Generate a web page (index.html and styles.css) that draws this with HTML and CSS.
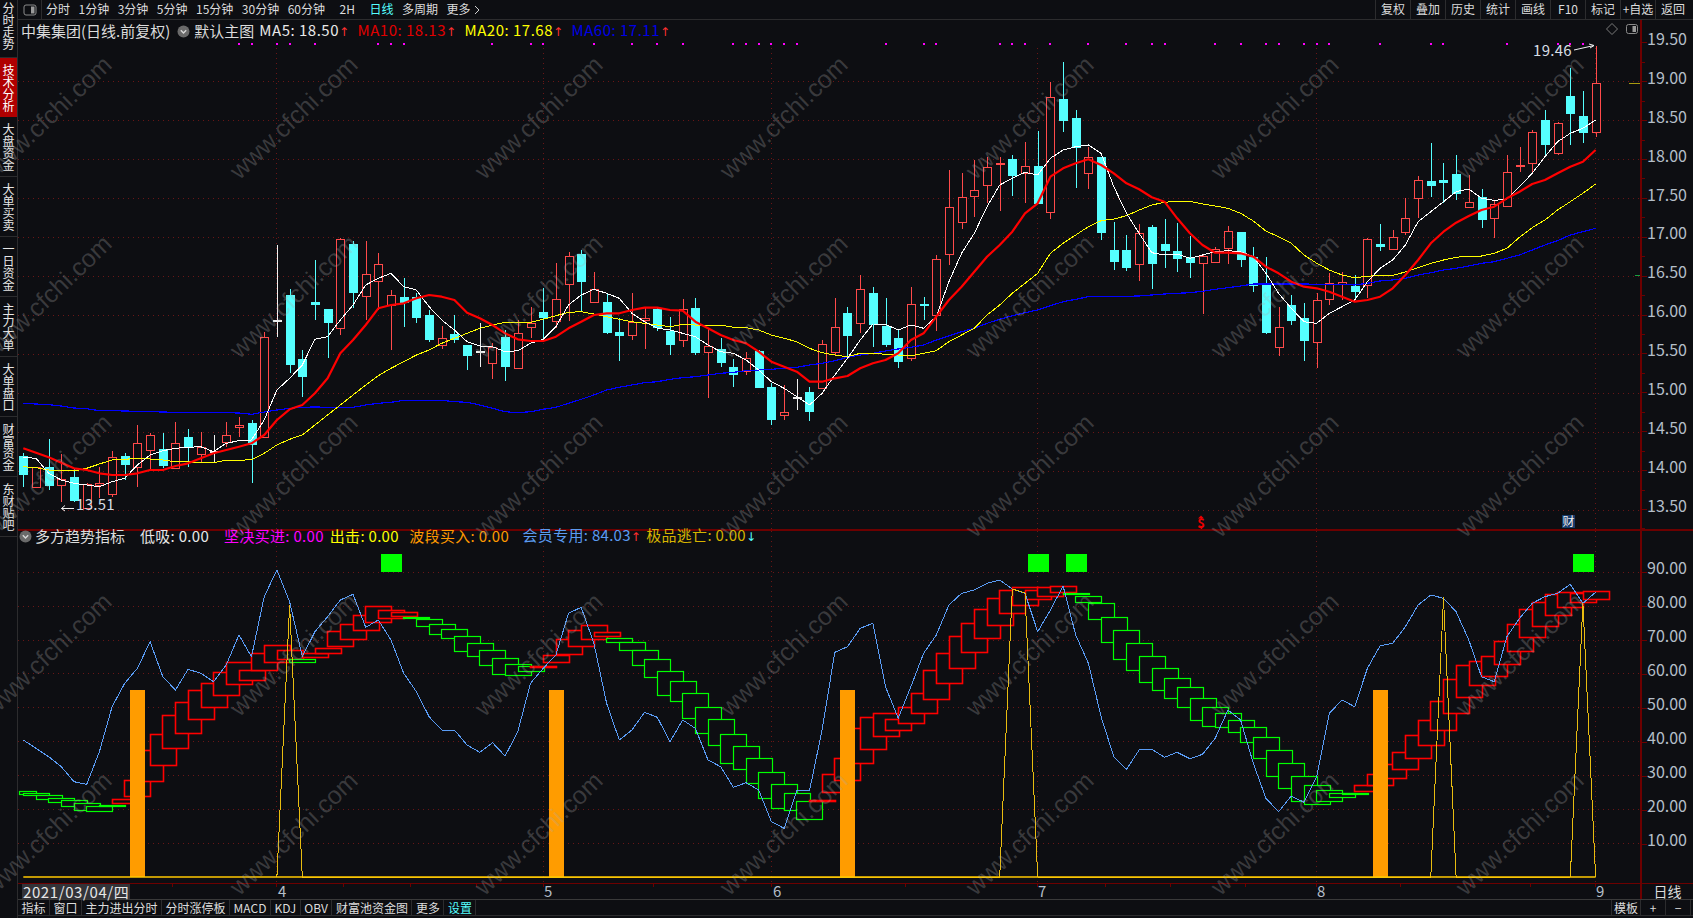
FILE: index.html
```html
<!DOCTYPE html>
<html lang="zh-CN">
<head>
<meta charset="utf-8">
<title>中集集团 日线</title>
<link rel="stylesheet" href="styles.css">
</head>
<body>
<div class="app">
  <nav class="rail">
    <a class="rail-item rail-first"><span>分时走势</span></a>
    <a class="rail-item rail-active"><span>技术分析</span></a>
    <a class="rail-item"><span>大盘资金</span></a>
    <a class="rail-item"><span>大单买卖</span></a>
    <a class="rail-item"><span>一日资金</span></a>
    <a class="rail-item"><span>主力大单</span></a>
    <a class="rail-item"><span>大单盘口</span></a>
    <a class="rail-item"><span>财富资金</span></a>
    <a class="rail-item"><span>东财贴吧</span></a>
  </nav>

  <div class="content">
    <header class="topbar">
      <div class="panel-toggle">
        <svg class="panel-icon" width="14" height="12" viewBox="0 0 14 12"><rect class="icon-frame" x="1" y="1" width="12" height="10" rx="2"/><rect class="icon-fill" x="8" y="2.5" width="3.5" height="7"/></svg>
      </div>
      <div class="periods">
        <span>分时</span><span>1分钟</span><span>3分钟</span><span>5分钟</span><span>15分钟</span><span>30分钟</span><span>60分钟</span><span class="period-2h">2H</span><span class="is-active">日线</span><span>多周期</span><span>更多 <svg class="more-caret" width="6" height="10" viewBox="0 0 6 10"><path d="M1 1l4 4-4 4"/></svg></span>
      </div>
      <div class="tools">
        <span>复权</span><span>叠加</span><span>历史</span><span>统计</span><span>画线</span><span>F10</span><span>标记</span><span>+自选</span><span>返回</span>
      </div>
    </header>

    <section class="pane pane-main">
      <div class="plot">
        <svg id="mainChart" class="chart" width="1622" height="509" viewBox="18 20 1622 509"></svg>
        <div class="legend legend-main">
          <span class="lg-title">中集集团(日线.前复权)</span>
          <svg class="lg-dot" width="13" height="13" viewBox="0 0 13 13"><circle class="dot-bg" cx="6.5" cy="6.5" r="6"/><path class="dot-chev" d="M3.8 5.2l2.7 2.7 2.7-2.7"/></svg>
          <span class="lg-title">默认主图</span>
          <span class="lg-white lg-ma">MA5: 18.50<i class="up">↑</i></span>
          <span class="lg-red lg-ma">MA10: 18.13<i class="up">↑</i></span>
          <span class="lg-yellow lg-ma">MA20: 17.68<i class="up">↑</i></span>
          <span class="lg-blue lg-ma">MA60: 17.11<i class="up">↑</i></span>
        </div>
      </div>
      <div class="axis axis-main">
        <span>19.50</span><span>19.00</span><span>18.50</span><span>18.00</span><span>17.50</span><span>17.00</span><span>16.50</span><span>16.00</span><span>15.50</span><span>15.00</span><span>14.50</span><span>14.00</span><span>13.50</span>
      </div>
    </section>

    <section class="pane pane-ind">
      <div class="plot">
        <svg id="indChart" class="chart" width="1622" height="352" viewBox="18 531 1622 352"></svg>
        <div class="legend legend-ind">
          <svg class="lg-dot" width="13" height="13" viewBox="0 0 13 13"><circle class="dot-bg" cx="6.5" cy="6.5" r="6"/><path class="dot-chev" d="M3.8 5.2l2.7 2.7 2.7-2.7"/></svg>
          <span class="lg-title lg-name">多方趋势指标</span>
          <span class="lg-white">低吸: 0.00</span>
          <span class="lg-magenta">坚决买进: 0.00</span>
          <span class="lg-yellow lg-close">出击: 0.00</span>
          <span class="lg-orange">波段买入: 0.00</span>
          <span class="lg-sky">会员专用: 84.03<i class="up">↑</i></span>
          <span class="lg-gold">极品逃亡: 0.00<i class="down">↓</i></span>
        </div>
      </div>
      <div class="axis axis-ind">
        <span>90.00</span><span>80.00</span><span>70.00</span><span>60.00</span><span>50.00</span><span>40.00</span><span>30.00</span><span>20.00</span><span>10.00</span>
      </div>
    </section>

    <div class="date-row">
      <div id="dateAxis" class="date-axis">
        <span class="date-current">2021/03/04/四</span>
      </div>
      <div class="date-side">日线</div>
    </div>

    <footer class="tabbar">
      <div class="tabs">
        <span>指标</span><span>窗口</span><span>主力进出分时</span><span>分时涨停板</span><span>MACD</span><span>KDJ</span><span>OBV</span><span>财富池资金图</span><span>更多</span><span class="is-active">设置</span>
      </div>
      <div class="tab-tools">
        <span class="tab-tpl">模板</span><span class="tab-btn">+</span><span class="tab-btn">−</span>
      </div>
    </footer>
  </div>

  <div id="watermarks" class="watermarks"></div>
</div>
<script src="chart.js"></script>
</body>
</html>
```
FILE: styles.css
```css
* { box-sizing: border-box; }
html, body { margin: 0; height: 100%; background: #0d0e12; overflow: hidden; }
body { font-family: "Noto Sans CJK SC", "Noto Sans", sans-serif; color: #dcdcdc; }

.app { position: relative; display: flex; width: 1693px; height: 918px; overflow: hidden; background: #0d0e12; }

/* left rail */
.rail { width: 18px; flex: none; border-right: 1px solid #2c2c2e; display: flex; flex-direction: column; }
.rail-item { height: 60px; display: flex; align-items: center; justify-content: center; border-bottom: 1px solid #2c2c2e; color: #e6e6e6; font-size: 12px; line-height: 15px; }
.rail-item span { writing-mode: vertical-rl; text-orientation: upright; letter-spacing: 0; }
.rail-first { height: 58px; padding-bottom: 5px; }
.rail-active { background: #b00000; color: #fff; border-bottom: 0; margin-right: 0; height: 59px; }

.content { flex: 1; min-width: 0; display: flex; flex-direction: column; }

/* top bar */
.topbar { height: 20px; flex: none; display: flex; align-items: stretch; border-bottom: 1px solid #2c2c2e; font-size: 12px; line-height: 18px; }
.panel-toggle { width: 24px; display: flex; align-items: center; justify-content: center; border-right: 1px solid #2c2c2e; }
.icon-frame { fill: none; stroke: #8a8a8a; }
.icon-fill { fill: #9a9a9a; }
.periods { display: flex; gap: 8.5px; padding-left: 4px; flex: 1; }
.period-2h { margin: 0 6px; }
.more-caret { margin-left: 1px; vertical-align: -1px; }
.more-caret path { fill: none; stroke: #d0d0d0; }
.is-active { color: #55ffff; }
.tools { display: flex; margin-right: 3px; }
.tools span { width: 35px; text-align: center; border-left: 1px solid #2c2c2e; white-space: nowrap; }

/* panes */
.pane { display: flex; flex: none; }
.pane-main { height: 511px; border-bottom: 2px solid #6d0000; }
.pane-ind { height: 353px; border-bottom: 1px solid #6d0000; }
.plot { position: relative; width: 1622px; flex: none; }
.chart { display: block; }
.axis { width: 53px; flex: none; border-left: 2px solid #6d0000; display: flex; flex-direction: column; color: #b4bec8; font-size: 16px; padding-left: 5px; }
.axis span { position: relative; top: -1px; display: block; flex: none; }
.axis span::before { content: ""; position: absolute; left: -5px; top: 60%; width: 5px; height: 1px; background: #6d0000; }
.axis-main span { height: 38.9px; line-height: 38.9px; }
.axis-main span::after { content: ""; position: absolute; left: -5px; top: 110%; width: 3px; height: 1px; background: #6d0000; }
.axis-ind { padding-top: 20px; }
.axis-ind span { height: 34.03px; line-height: 34.03px; }
.axis-ind span::before { top: 64%; }

/* legends */
.legend { position: absolute; left: 0; top: 0; display: flex; align-items: center; font-size: 15px; line-height: 18px; white-space: nowrap; }
.legend i { font-style: normal; font-family: "DejaVu Sans", sans-serif; font-size: 12px; margin-left: 0; }
.legend-main { left: 3px; top: 1px; gap: 6px; }
.legend-main .lg-dot { margin: 0 -2px 0 1px; }
.legend-ind { left: 1px; top: 0; gap: 15px; height: 14px; margin-top: -2px; padding-top: 0; letter-spacing: .3px; }
.legend .lg-dot { flex: none; }
.dot-bg { fill: #6a6a6a; }
.dot-chev { fill: none; stroke: #d8d8d8; stroke-width: 1.4; }
.lg-title { color: #dcdcdc; }
.lg-name { margin-left: -12px; letter-spacing: 0; }
.lg-close { margin-left: -9px; }
.lg-ma { letter-spacing: .5px; margin-left: -1px; }
.lg-ma + .lg-ma { margin-left: 2px; }
.lg-white { color: #e8e8e8; }
.lg-red { color: #e00000; }
.lg-yellow { color: #ffff00; }
.lg-blue { color: #0000e6; }
.lg-magenta { color: #ff00ff; }
.lg-orange { color: #ff9900; margin-left: -4.5px; }
.lg-sky { color: #5b9bf0; margin-left: -1.5px; }
.lg-gold { color: #d6b400; margin-left: -10px; }
.up { color: #ff3030; }
.down { color: #55ffff; }

/* date row */
.date-row { height: 16px; flex: none; display: flex; border-bottom: 1px solid #3a3a3a; }
.date-axis { position: relative; width: 1622px; flex: none; font-size: 15px; line-height: 15px; color: #b4bec8; }
.date-current { position: absolute; left: 4px; top: 0; height: 15px; padding: 0 1px; background: #333338; color: #e6e6e6; letter-spacing: .6px; }
.date-tick { position: absolute; top: -1px; }
.date-mark { position: absolute; top: 0; width: 1px; height: 3px; background: #6d0000; }
.date-side { width: 53px; flex: none; border-left: 2px solid #6d0000; text-align: center; font-size: 14px; line-height: 15px; color: #dcdcdc; }

/* bottom tabs */
.tabbar { height: 16px; flex: none; display: flex; justify-content: space-between; border-bottom: 1px solid #2c2c2e; font-size: 12px; line-height: 15px; }
.tabs { display: flex; }
.tabs span { padding: 0 3.5px; border-right: 1px solid #2c2c2e; white-space: nowrap; }
.tab-tools { display: flex; margin-right: 2px; }
.tab-tpl { width: 30px; text-align: center; border-left: 1px solid #2c2c2e; border-right: 1px solid #2c2c2e; }
.tab-btn { width: 25px; text-align: center; border-right: 1px solid #2c2c2e; }

/* watermark overlay */
.watermarks { position: absolute; left: -74.5px; top: 28px; display: grid; grid-template-columns: repeat(7, 245.3px); grid-auto-rows: 179px; pointer-events: none; }
.wm { display: flex; align-items: center; justify-content: center; white-space: nowrap; font-family: "Liberation Sans", sans-serif; font-size: 25px; color: rgba(170, 170, 170, .28); }
.wm span { display: block; transform: rotate(-43.5deg); }

/* chart marks */
.grid { stroke: #6a1616; stroke-width: 1; stroke-dasharray: 1 4; fill: none; }
.wick-u { stroke: #ff4a4a; }
.wick-d { stroke: #55ffff; }
.wick-w { stroke: #f0f0f0; }
.body-u { fill: #0d0e12; stroke: #ff4a4a; }
.body-d { fill: #55ffff; stroke: #55ffff; }
.body-w { fill: #f0f0f0; stroke: #f0f0f0; }
.crisp { shape-rendering: crispEdges; }
.line { fill: none; stroke-linejoin: round; }
.ma5 { stroke: #ffffff; stroke-width: 1; shape-rendering: crispEdges; }
.ma10 { stroke: #ff0000; stroke-width: 2.2; }
.ma20 { stroke: #ffff00; stroke-width: 1; shape-rendering: crispEdges; }
.ma60 { stroke: #0000ff; stroke-width: 1.2; shape-rendering: crispEdges; }
.signal { fill: #ff00ff; }
.note { fill: #d6dde4; font-size: 15px; letter-spacing: .3px; }
.note-arrow { fill: none; stroke: #f0f0f0; stroke-width: 1; }
.dollar { fill: #f00000; font-size: 13px; font-weight: 700; text-anchor: middle; }
.dollar-cap { fill: #f00000; }
.tag-bg { fill: #163a6a; }
.tag-text { fill: #f0f0f0; font-size: 12px; text-anchor: middle; }
.side-yellow { stroke: #a89a10; }
.side-green { stroke: #18a040; }
.icon-diamond { fill: none; stroke: #7a7a7a; }
.box-r { fill: #0d0e12; stroke: #ff0000; stroke-width: 1.6; }
.box-g { fill: #0d0e12; stroke: #00ff00; stroke-width: 1.2; }
.bar-orange { fill: #ff9c00; }
.bar-green { fill: #00ff00; }
.sky { stroke: #5a9cf5; stroke-width: 1; shape-rendering: crispEdges; }
.spike { stroke: #e8bc10; stroke-width: 1; shape-rendering: crispEdges; }
.baseline { stroke: #ffc800; stroke-width: 1.6; }
```
FILE: chart.js
```js
var NS = "http://www.w3.org/2000/svg";
function el(parent, tag, attrs, text) {
  var n = document.createElementNS(NS, tag);
  for (var k in attrs) n.setAttribute(k, attrs[k]);
  if (text) n.textContent = text;
  parent.appendChild(n);
  return n;
}
function X(i) { return 23.3 + 12.68 * i; }
function S(x) { return Math.round(x) + 0.5; }

/* [type, bodyTop, bodyBottom, wickTop, wickBottom], values are y*3 */
var candles = [
["d",1368,1422,1360,1462],["u",1402,1463,1400,1463],["d",1400,1455,1318,1470],["u",1438,1457,1362,1505],["d",1432,1502,1408,1505],
["u",1453,1525,1450,1525],["u",1450,1456,1400,1495],["u",1370,1480,1352,1492],["d",1368,1392,1360,1440],["u",1330,1403,1275,1460],
["u",1306,1350,1300,1408],["d",1348,1395,1300,1405],["u",1328,1403,1267,1405],["d",1312,1343,1288,1400],["u",1340,1360,1297,1385],
["w",1354,1356,1305,1385],["u",1305,1325,1267,1340],["u",1276,1282,1250,1310],["d",1268,1330,1260,1448],["u",1012,1312,995,1312],
["w",959,961,735,1012],["d",885,1092,868,1120],["d",1078,1128,1050,1190],["d",906,912,780,960],["d",927,965,927,1075],
["u",718,985,715,1005],["d",732,875,722,925],["u",823,890,722,960],["u",793,845,760,930],["u",886,915,870,1050],
["d",892,908,835,980],["d",892,953,880,970],["d",946,1017,930,1025],["u",1013,1035,978,1047],["d",1002,1017,945,1030],
["d",1035,1065,1035,1110],["w",1054,1056,970,1100],["u",1042,1090,1030,1137],["d",1010,1097,990,1142],["u",998,1102,960,1102],
["u",970,983,920,1015],["d",937,953,865,1020],["u",898,963,790,985],["u",768,853,755,963],["d",762,843,750,935],
["u",866,905,816,905],["d",907,998,880,1002],["d",997,1007,955,1082],["u",965,1003,880,1020],["u",955,960,925,1047],
["d",928,982,925,992],["d",993,1032,950,1065],["u",928,1022,897,1040],["d",924,1055,895,1065],["u",1037,1055,985,1193],
["d",1047,1085,1015,1100],["d",1102,1124,1077,1160],["u",1075,1115,1055,1125],["d",1053,1160,1050,1165],["d",1160,1257,1150,1275],
["u",1235,1243,1155,1260],["w",1191,1193,1137,1230],["d",1176,1233,1160,1262],["u",1033,1165,1020,1165],["u",982,1058,895,1068],
["d",940,1005,920,1075],["u",868,970,825,998],["d",880,973,860,1040],["d",978,1033,895,1042],["d",1015,1085,990,1105],
["u",913,1075,862,1082],["d",913,917,892,960],["u",778,945,765,992],["u",620,760,510,795],["u",592,667,520,687],
["u",571,590,480,650],["u",502,556,470,610],["u",490,494,470,632],["d",477,525,465,587],["u",499,520,425,610],
["d",498,610,392,612],["u",290,636,245,656],["d",297,360,185,395],["d",354,442,330,565],["u",472,520,440,568],
["d",472,698,470,720],["d",750,782,665,810],["d",750,800,705,812],["u",700,793,672,843],["d",682,791,675,866],
["d",733,752,657,805],["d",754,776,670,815],["d",771,785,708,833],["u",768,790,765,942],["u",746,784,740,787],
["u",692,742,678,792],["d",697,779,697,802],["d",770,853,740,875],["d",855,995,770,1002],["u",980,1039,920,1067],
["d",915,960,885,975],["d",955,1022,908,1082],["u",899,1024,880,1103],["u",850,898,820,915],["u",845,852,815,900],
["d",858,872,825,895],["u",718,855,715,893],["d",733,740,672,753],["u",710,745,690,748],["u",655,697,595,705],
["u",541,595,527,653],["d",544,557,430,590],["d",541,548,488,610],["d",523,580,465,600],["u",605,620,525,625],
["d",592,659,568,683],["u",612,655,602,715],["u",515,617,465,618],["u",496,499,440,515],["u",395,487,390,520],
["d",361,434,330,472],["u",368,457,365,465],["d",289,341,205,435],["d",349,398,272,430],["u",250,397,137,412]
];

var ma5 = [1372,1375,1420,1440,1450,1455,1460,1445,1435,1395,1365,1352,1345,1342,1340,1355,1330,1322,1320,1260,1170,1135,1095,1018,1010,960,915,855,835,820,860,870,920,960,990,1025,1038,1040,1055,1052,1030,1018,980,915,885,868,880,895,940,965,985,990,1000,1010,1035,1055,1060,1080,1110,1145,1165,1190,1215,1180,1125,1075,
1020,972,973,990,975,985,950,845,760,700,620,555,535,517,525,475,450,440,435,460,560,640,700,758,765,762,775,765,755,752,755,770,820,880,925,965,970,940,920,900,845,805,780,735,665,635,605,575,567,595,601,598,560,520,470,425,400,385,360];
var ma10 = [1345,1358,1372,1388,1405,1410,1420,1425,1425,1420,1410,1410,1398,1390,1375,1360,1350,1340,1330,1305,1260,1228,1215,1180,1135,1060,1020,975,925,915,910,895,885,890,900,938,955,975,1000,1018,1023,1023,1010,985,965,945,940,940,930,923,923,930,932,965,985,1005,1020,1030,1055,1085,1100,1115,1145,1145,1135,1128,
1105,1090,1080,1060,1020,1000,950,900,860,815,770,735,695,640,610,530,505,490,478,495,520,550,568,592,605,655,700,735,758,758,760,770,800,820,845,860,865,875,890,905,900,890,865,825,780,730,695,668,648,630,620,595,575,552,540,520,500,485,450];
var ma20 = [1400,1403,1410,1412,1413,1405,1392,1380,1378,1375,1377,1380,1385,1385,1388,1388,1381,1381,1379,1360,1335,1318,1305,1275,1245,1215,1185,1155,1127,1105,1085,1065,1050,1030,1015,1000,985,975,967,967,967,958,947,937,935,942,950,958,965,970,975,980,973,975,975,975,982,983,990,1005,1015,1025,1045,1058,1065,1070,
1060,1060,1063,1065,1067,1060,1052,1025,1005,985,945,915,880,850,820,760,730,705,680,662,657,647,630,615,607,604,604,612,618,625,640,663,693,710,730,765,790,810,825,833,829,826,826,816,803,790,780,772,768,768,760,745,712,683,660,630,605,580,552];
var ma60 = [1210,1212,1214,1218,1224,1226,1232,1232,1233,1234,1235,1236,1237,1238,1238,1238,1238,1239,1243,1236,1230,1225,1222,1221,1222,1222,1222,1215,1210,1207,1201,1201,1201,1201,1205,1207,1215,1225,1235,1238,1235,1228,1222,1210,1198,1185,1170,1162,1155,1148,1145,1138,1133,1130,1125,1120,1117,1112,1110,1108,1105,1102,1095,1090,1082,1072,
1065,1060,1053,1047,1042,1035,1020,1008,995,985,970,958,947,938,930,917,905,898,890,890,889,889,888,885,882,880,878,874,868,863,858,852,852,852,852,852,853,853,853,855,850,843,840,835,825,818,810,805,798,790,785,775,765,750,735,722,705,695,685];

var sky = [720,745,770,800,845,853,755,620,550,505,425,530,570,508,520,545,495,405,470,290,210,305,470,395,350,300,283,382,360,420,520,575,650,690,690,735,757,728,768,695,550,505,465,340,322,430,610,720,690,637,652,725,660,685,780,800,862,848,870,965,985,872,872,690,457,440,
385,370,560,655,560,460,405,315,280,270,250,240,267,280,395,330,258,405,490,650,770,808,750,748,772,757,776,763,715,630,660,790,895,935,888,907,830,640,600,620,505,437,430,380,315,285,295,335,420,530,545,410,355,310,290,280,253,310,277];

var boxes = [[874,882],[880,887],[886,899],[893,905],[901,918],[910,930],[917,932],[916,920],
[898,910],[841,890],[750,842],[703,797],[646,745],[607,700],[571,658],[550,622],[517,586],[487,553],[509,538],[460,512],[436,487],[451,477],[478,488],[459,470],[444,460],[394,440],[371,416],[346,391],[319,367],[331,355],[337,350],[350,353],[358,380],[373,404],[388,415],[409,453],[430,470],[451,497],[475,523],[493,526],[498,512],[497,498],[466,488],[418,463],[391,440],[376,418],[397,410],[415,428],[427,450],[451,496],[478,532],[514,586],[544,604],[580,655],[622,700],[658,736],[703,790],[739,808],[775,850],[817,895],[853,925],[880,932],[903,956],[900,903],[823,878],[775,842],[685,790],[650,746],[640,710],[658,692],[620,668],[580,641],[510,596],[460,551],[408,503],[370,458],[328,416],[295,377],[271,341],[260,315],[271,298],[262,288],[259,277],[278,280],[287,305],[310,358],[350,425],[391,479],[430,512],[469,548],[503,569],[533,592],[560,620],[593,659],[622,678],[640,682],[661,698],[682,728],[712,776],[751,830],[790,866],[829,905],[856,914],[871,905],[878,890],[880,883],[854,872],[823,857],[793,836],[757,808],[706,776],[661,737],[604,692],[538,641],[496,593],[484,556],[469,529],[424,494],[373,455],[328,413],[305,377],[281,343],[275,319],[280,308],[272,295]];
function isGreen(i) {
  return i <= 7 || i === 22 || (i >= 31 && i <= 40) || (i >= 47 && i <= 62) || (i >= 83 && i <= 105);
}

var signals = [17,18,20,21,23,28,29,30,37,40,41,45,48,50,52,56,57,58,59,60,61,68,71,72,77,78,79,81,84,87,89,90,94,96,98,99,101,102,103,107,111,112,117,121,122,123];
var monthLines = [276.5, 543.5, 771.5, 1037.5, 1316.5, 1595.5];

function drawMain(svg) {
  for (var k = 0; k < 11; k++) {
    var gy = Math.round(81 + 38.95 * k) + 0.5;
    el(svg, "line", {x1: 18, x2: 1640, y1: gy, y2: gy, "class": "grid"});
  }
  el(svg, "line", {x1: 18, x2: 1640, y1: 510.5, y2: 510.5, "class": "grid"});
  monthLines.forEach(function (mx) {
    el(svg, "line", {x1: mx, x2: mx, y1: 48, y2: 529, "class": "grid"});
  });
  signals.forEach(function (i) {
    el(svg, "rect", {x: Math.round(X(i)) - 1, y: 43, width: 2, height: 2, "class": "signal crisp"});
  });
  candles.forEach(function (c, i) {
    var cx = S(X(i));
    var t = c[0];
    el(svg, "line", {x1: cx, x2: cx, y1: c[3] / 3, y2: c[4] / 3, "class": "wick-" + t + " crisp"});
    var top = Math.round(c[1] / 3) + 0.5;
    var h = Math.max(1, Math.round((c[2] - c[1]) / 3));
    el(svg, "rect", {x: cx - 4, y: top, width: 8, height: h, "class": "body-" + t + " crisp"});
  });
  [[ma60, "ma60"], [ma20, "ma20"], [ma5, "ma5"], [ma10, "ma10"]].forEach(function (pair) {
    var pts = pair[0].map(function (v, i) { return X(i).toFixed(1) + "," + (v / 3).toFixed(1); }).join(" ");
    el(svg, "polyline", {points: pts, "class": "line " + pair[1]});
  });
  el(svg, "text", {x: 1533, y: 56, "class": "note"}, "19.46");
  el(svg, "path", {d: "M1574 50L1594 45.5M1589 44L1594 45.5L1590 48", "class": "note-arrow"});
  el(svg, "text", {x: 76, y: 510, "class": "note"}, "13.51");
  el(svg, "path", {d: "M74 508.5H61.5M65 505.5L61.5 508.5L65 511", "class": "note-arrow"});
  el(svg, "text", {x: 1201, y: 528, "class": "dollar"}, "$");
  el(svg, "polygon", {points: "1198,518.5 1204,518.5 1201,515.5", "class": "dollar-cap"});
  el(svg, "rect", {x: 1562, y: 515, width: 13, height: 13, "class": "tag-bg"});
  el(svg, "text", {x: 1568.5, y: 526, "class": "tag-text"}, "财");
  el(svg, "line", {x1: 1629, x2: 1640, y1: 83.5, y2: 83.5, "class": "side-yellow crisp"});
  el(svg, "line", {x1: 1635, x2: 1640, y1: 275.5, y2: 275.5, "class": "side-green crisp"});
  el(svg, "polygon", {points: "1612,23.5 1617.5,29 1612,34.5 1606.5,29", "class": "icon-diamond"});
  el(svg, "rect", {x: 1626.5, y: 24.5, width: 11, height: 9, rx: 2, "class": "icon-frame"});
  el(svg, "rect", {x: 1632.5, y: 26, width: 3.5, height: 6, "class": "icon-fill"});
}

function drawIndicator(svg) {
  [572, 606, 640, 673, 707, 741, 775, 809, 843].forEach(function (gy) {
    el(svg, "line", {x1: 18, x2: 1640, y1: gy + 0.5, y2: gy + 0.5, "class": "grid"});
  });
  monthLines.forEach(function (mx) {
    el(svg, "line", {x1: mx, x2: mx, y1: 531, y2: 883, "class": "grid"});
  });
  boxes.forEach(function (b, i) {
    var cx = S(X(i));
    var left = Math.max(19.5, cx - 13);
    var top = Math.round(500 + b[0] / 3) + 0.5;
    var h = Math.max(1, Math.round((b[1] - b[0]) / 3));
    el(svg, "rect", {x: left, y: top, width: cx + 13 - left, height: h, "class": isGreen(i) ? "box-g" : "box-r"});
  });
  [9, 42, 65, 107].forEach(function (i) {
    el(svg, "rect", {x: Math.round(X(i)) - 7, y: 690, width: 15, height: 187, "class": "bar-orange crisp"});
  });
  [29, 80, 83, 123].forEach(function (i) {
    el(svg, "rect", {x: Math.round(X(i)) - 10, y: 554, width: 21, height: 18, "class": "bar-green crisp"});
  });
  var sp = sky.map(function (v, i) { return X(i).toFixed(1) + "," + (500 + v / 3).toFixed(1); }).join(" ");
  el(svg, "polyline", {points: sp, "class": "line sky"});
  var base = 877;
  var pk = [[X(20), base], [X(21), 605], [X(22), base], [X(77), base], [X(78), 589], [X(79), 593], [X(80), base], [X(111), base], [X(112), 598], [X(113), base], [X(122), base], [X(123), 603], [X(124), base]];
  el(svg, "polyline", {points: pk.map(function (p) { return p[0].toFixed(1) + "," + p[1]; }).join(" "), "class": "line spike"});
  el(svg, "line", {x1: X(0), x2: X(124), y1: base, y2: base, "class": "baseline"});
}

function drawDates(box) {
  [["4", 263], ["5", 529], ["6", 758], ["7", 1023], ["8", 1302], ["9", 1581]].forEach(function (d) {
    var s = document.createElement("span");
    s.className = "date-tick";
    s.style.left = d[1] - 3 + "px";
    s.textContent = d[0];
    box.appendChild(s);
  });
  monthLines.concat([172, 343, 410, 476, 653, 905, 1105, 1170, 1245, 1400, 1470, 1530]).forEach(function (mx) {
    var m = document.createElement("i");
    m.className = "date-mark";
    m.style.left = mx - 18.5 + "px";
    box.appendChild(m);
  });
}

function drawWatermarks(box) {
  for (var i = 0; i < 35; i++) {
    var cell = document.createElement("div");
    cell.className = "wm";
    var s = document.createElement("span");
    s.textContent = "www.cfchi.com";
    cell.appendChild(s);
    box.appendChild(cell);
  }
}

drawMain(document.getElementById("mainChart"));
drawIndicator(document.getElementById("indChart"));
drawDates(document.getElementById("dateAxis"));
drawWatermarks(document.getElementById("watermarks"));
```
